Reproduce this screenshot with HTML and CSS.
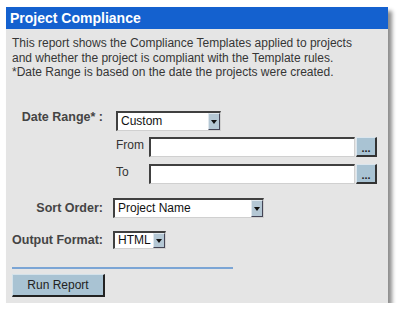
FILE: index.html
```html
<!doctype html>
<html lang="en">
  <head>
    <meta charset="UTF-8" />
    <title>Project Compliance</title>
    <link rel="stylesheet" href="styles.css">
  </head>
  <body>
    <div class="panel">
      <div class="panel-title">Project Compliance</div>

      <div class="panel-body">
        <p class="intro">
          This report shows the Compliance Templates applied to projects<br>
          and whether the project is compliant with the Template rules.<br>
          *Date Range is based on the date the projects were created.
        </p>

        <div class="form">
          <div class="label label-top">Date Range* :</div>
          <div class="range">
            <div class="select select-range">
              <span class="select-value">Custom</span>
              <span class="select-arrow"><svg width="6" height="4" viewBox="0 0 6 4"><path d="M0 0H6L3 4Z" fill="#111"/></svg></span>
            </div>
            <div class="range-row row-from">
              <span class="range-label">From</span>
              <input class="text-input" type="text">
              <button class="btn-dots" type="button">...</button>
            </div>
            <div class="range-row row-to">
              <span class="range-label">To</span>
              <input class="text-input" type="text">
              <button class="btn-dots" type="button">...</button>
            </div>
          </div>

          <div class="label row-sort">Sort Order:</div>
          <div class="row-sort">
            <div class="select select-sort">
              <span class="select-value">Project Name</span>
              <span class="select-arrow"><svg width="6" height="4" viewBox="0 0 6 4"><path d="M0 0H6L3 4Z" fill="#111"/></svg></span>
            </div>
          </div>

          <div class="label row-output">Output Format:</div>
          <div class="row-output">
            <div class="select select-output">
              <span class="select-value">HTML</span>
              <span class="select-arrow"><svg width="6" height="4" viewBox="0 0 6 4"><path d="M0 0H6L3 4Z" fill="#111"/></svg></span>
            </div>
          </div>
        </div>

        <div class="divider"></div>

        <button class="btn-run" type="button">Run Report</button>
      </div>
    </div>
  </body>
</html>
```

FILE: styles.css
```css
:root {
  --title-color: #1461cf;
  --panel-color: #e5e5e5;
  --text-color: #363636;
  --label-color: #444;
  --button-color: #a9c3d3;
}

* {
  margin: 0;
  padding: 0;
  box-sizing: border-box;
}

body {
  font-family: "Liberation Sans", Arial, sans-serif;
  font-size: 12px;
  color: var(--text-color);
  background-color: #fff;
  padding: 7px 0 0 6px;
}

.panel {
  width: 382px;
  height: 296px;
  background-color: var(--panel-color);
  box-shadow: 4px 4px 4px rgba(0, 0, 0, 0.45);
}

.panel-title {
  height: 22px;
  line-height: 22px;
  padding-left: 4px;
  background-color: var(--title-color);
  color: #fff;
  font-size: 14px;
  font-weight: 700;
}

.panel-body {
  padding: 7px 6px 0 6px;
}

.intro {
  line-height: 14.5px;
  height: 43.5px;
  white-space: nowrap;
}

.form {
  display: grid;
  grid-template-columns: 91px 1fr;
  column-gap: 10px;
  margin-top: 31.5px;
  align-items: center;
}

.label {
  text-align: right;
  font-size: 12.5px;
  font-weight: 700;
  color: var(--label-color);
  white-space: nowrap;
}

.label-top {
  align-self: start;
  line-height: 14px;
  margin-top: -1px;
}

.range {
  padding-left: 3px;
}

.select {
  display: flex;
  align-items: stretch;
  height: 20px;
  background-color: #fff;
  border-top: 2px solid #404040;
  border-left: 2px solid #404040;
  border-bottom: 1px solid #d0d0d0;
  border-right: 1px solid #d0d0d0;
}

.select-value {
  flex: 1;
  line-height: 17px;
  padding-left: 3px;
  color: #111;
}

.select-arrow {
  width: 12px;
  display: flex;
  align-items: center;
  justify-content: center;
  background-color: #b4c7d4;
  border-top: 1px solid #e0e8ee;
  border-left: 1px solid #e0e8ee;
  border-bottom: 1px solid #445;
  border-right: 1px solid #445;
}

.select-range {
  width: 105px;
}

.range-row {
  display: flex;
  align-items: center;
  height: 20px;
}

.row-from {
  margin-top: 6px;
}

.row-to {
  margin-top: 7px;
}

.range-label {
  width: 33px;
  margin-top: -5px;
  color: #333;
}

.text-input {
  width: 206px;
  height: 20px;
  background-color: #fff;
  border-top: 2px solid #404040;
  border-left: 2px solid #404040;
  border-bottom: 1px solid #d0d0d0;
  border-right: 1px solid #d0d0d0;
  outline: none;
}

.btn-dots {
  width: 21px;
  height: 20px;
  margin-left: 1px;
  background-color: var(--button-color);
  border-top: 1px solid #dbe6ee;
  border-left: 1px solid #dbe6ee;
  border-bottom: 2px solid #333;
  border-right: 2px solid #333;
  font-family: "Liberation Sans", Arial, sans-serif;
  font-size: 11px;
  font-weight: 700;
  line-height: 14px;
  color: #222;
  padding-top: 2px;
}

.row-sort {
  margin-top: 14px;
}

.select-sort {
  width: 151px;
}

.row-output {
  margin-top: 13px;
}

.select-output {
  width: 53px;
  height: 18px;
}

.select-output .select-value {
  line-height: 15px;
}

.divider {
  width: 221px;
  height: 2px;
  margin-top: 18px;
  background-color: #7ba5d5;
}

.btn-run {
  display: block;
  width: 93px;
  height: 23px;
  margin-top: 5px;
  background-color: var(--button-color);
  border-top: 1px solid #d4e2ea;
  border-left: 1px solid #d4e2ea;
  border-bottom: 2px solid #222;
  border-right: 2px solid #222;
  font-family: "Liberation Sans", Arial, sans-serif;
  font-size: 12px;
  color: #222;
}
```
